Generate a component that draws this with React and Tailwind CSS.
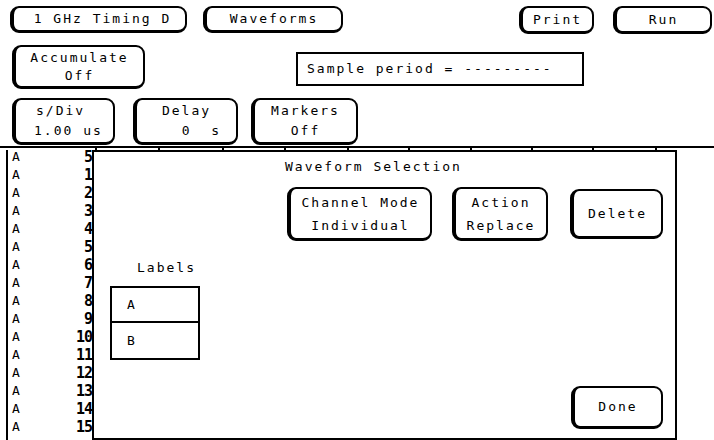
import React from "react";

function Key({ className, children }) {
  return (
    <div
      className={
        "flex flex-col items-center justify-center bg-white border-black rounded-[9px] border-t-2 border-r-2 border-l-4 border-b-[3px] shrink-0 " +
        className
      }
    >
      {children}
    </div>
  );
}

const rows = ["5", "1", "2", "3", "4", "5", "6", "7", "8", "9", "10", "11", "12", "13", "14", "15"];
const ticks = [95, 158, 222, 284, 347, 408, 470, 531, 592, 655];

export default function App() {
  return (
    <div className="w-[714px] h-[440px] bg-white text-black text-[13px] tracking-[2px] font-['DejaVu_Sans_Mono',monospace] flex flex-col overflow-hidden">
      {/* top row */}
      <div className="flex items-start h-[45px] pt-[6px]">
        <Key className="ml-[10px] w-[177px] h-[27px] pl-[6px]">1 GHz Timing D</Key>
        <Key className="ml-[16px] w-[140px] h-[27px]">Waveforms</Key>
        <Key className="ml-[176px] w-[75px] h-[28px]">Print</Key>
        <Key className="ml-[19px] w-[99px] h-[28px]">Run</Key>
      </div>

      {/* accumulate + sample period */}
      <div className="flex items-start h-[53px]">
        <Key className="ml-[12px] w-[133px] h-[44px] leading-[18px]">
          <span>Accumulate</span>
          <span>Off</span>
        </Key>
        <div className="ml-[151px] mt-[7px] w-[288px] h-[34px] border-2 border-black flex items-center pl-[9px] whitespace-pre">
          Sample period = ---------
        </div>
      </div>

      {/* s/Div, Delay, Markers */}
      <div className="flex items-start h-[48px]">
        <Key className="ml-[12px] w-[103px] h-[47px] leading-[20px] !items-start pl-[18px] whitespace-pre">
          <span className="pl-[2px]">s/Div</span>
          <span>1.00 us</span>
        </Key>
        <Key className="ml-[18px] w-[105px] h-[47px] leading-[20px] whitespace-pre">
          <span>Delay</span>
          <span className="pl-[30px]">0  s</span>
        </Key>
        <Key className="ml-[13px] w-[107px] h-[47px] leading-[20px]">
          <span>Markers</span>
          <span>Off</span>
        </Key>
      </div>

      {/* time axis line */}
      <svg width="714" height="4" className="block shrink-0">
        <rect x="0" y="0" width="714" height="2" fill="#000" />
        {ticks.map((t) => (
          <rect key={t} x={t} y="2" width="2" height="2" fill="#000" />
        ))}
      </svg>

      {/* main area */}
      <div className="flex flex-1">
        <div className="ml-[6px] w-[86px] border-l-2 border-black">
          <div className="-mt-[2px]">
            {rows.map((n, i) => (
              <div key={i} className="h-[18px] flex items-center justify-between pl-[4px] tracking-normal">
                <span className="text-[13px]">A</span>
                <span className="text-[15px] font-bold tracking-[-1px]">{n}</span>
              </div>
            ))}
          </div>
        </div>

        {/* dialog */}
        <div className="w-[585px] h-[290px] border-2 border-black flex flex-col">
          <div className="pt-[7px] pl-[191px] leading-[16px]">Waveform Selection</div>
          <div className="flex items-center mt-[12px]">
            <Key className="ml-[193px] w-[145px] h-[54px] leading-[23px]">
              <span>Channel Mode</span>
              <span>Individual</span>
            </Key>
            <Key className="ml-[20px] w-[96px] h-[54px] leading-[23px]">
              <span>Action</span>
              <span>Replace</span>
            </Key>
            <Key className="ml-[22px] w-[93px] h-[50px]">Delete</Key>
          </div>
          <div className="flex flex-1 items-start">
            <div className="ml-[16px] flex flex-col">
              <div className="mt-[19px] pl-[27px] leading-[16px]">Labels</div>
              <div className="mt-[10px] w-[90px] border-2 border-black">
                <div className="h-[35px] flex items-center pl-[15px] border-b-2 border-black">A</div>
                <div className="h-[35px] flex items-center pl-[15px]">B</div>
              </div>
            </div>
            <Key className="self-end ml-auto mr-[12px] mb-[9px] w-[92px] h-[43px]">Done</Key>
          </div>
        </div>
      </div>
    </div>
  );
}
